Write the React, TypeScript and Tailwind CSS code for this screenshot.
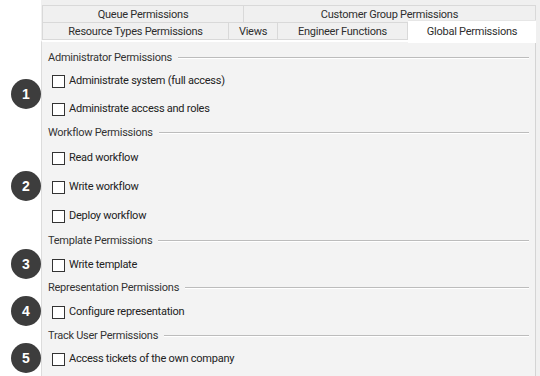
const font = { fontFamily: 'Roboto, "Noto Sans", sans-serif' };

type Row =
  | { kind: 'head'; text: string; mt: string }
  | { kind: 'check'; text: string; mt: string };

const rows: Row[] = [
  { kind: 'head', text: 'Administrator Permissions', mt: 'mt-[8px]' },
  { kind: 'check', text: 'Administrate system (full access)', mt: 'mt-[7px]' },
  { kind: 'check', text: 'Administrate access and roles', mt: 'mt-[12px]' },
  { kind: 'head', text: 'Workflow Permissions', mt: 'mt-[8px]' },
  { kind: 'check', text: 'Read workflow', mt: 'mt-[9px]' },
  { kind: 'check', text: 'Write workflow', mt: 'mt-[13px]' },
  { kind: 'check', text: 'Deploy workflow', mt: 'mt-[13px]' },
  { kind: 'head', text: 'Template Permissions', mt: 'mt-[9px]' },
  { kind: 'check', text: 'Write template', mt: 'mt-[8px]' },
  { kind: 'head', text: 'Representation Permissions', mt: 'mt-[7px]' },
  { kind: 'check', text: 'Configure representation', mt: 'mt-[8px]' },
  { kind: 'head', text: 'Track User Permissions', mt: 'mt-[8px]' },
  { kind: 'check', text: 'Access tickets of the own company', mt: 'mt-[7px]' },
];

const badges = [
  { n: '1', top: 'top-[79px]' },
  { n: '2', top: 'top-[171px]' },
  { n: '3', top: 'top-[249px]' },
  { n: '4', top: 'top-[296px]' },
  { n: '5', top: 'top-[343px]' },
];

function Tab({ label, className }: { label: string; className: string }) {
  return (
    <div className={`flex items-center justify-center border-r border-[#d9d9d9] pt-[2px] text-[11px] tracking-[-0.25px] text-[#2e2e2e] ${className}`}>
      {label}
    </div>
  );
}

export default function App() {
  return (
    <div className="relative flex h-[376px] w-[540px] overflow-hidden bg-white" style={font}>
      <div className="w-[41px] shrink-0" />

      <div className="flex flex-1 flex-col bg-[#f0f0f0] pt-[5px]">
        {/* tab strip */}
        <div className="ml-[1px] mr-[4px] flex h-[17px] border-l border-t border-[#d9d9d9]">
          <Tab label="Queue Permissions" className="w-[201px]" />
          <Tab label="Customer Group Permissions" className="flex-1" />
        </div>
        <div className="ml-[1px] mr-[4px] flex h-[18px] border-l border-t border-b border-[#d9d9d9]">
          <Tab label="Resource Types Permissions" className="w-[186px]" />
          <Tab label="Views" className="w-[49px]" />
          <Tab label="Engineer Functions" className="w-[130px]" />
          <div className="z-10 mt-[-3px] flex h-[23px] flex-1 items-start justify-center border-t border-[#e6e6e6] bg-white pt-[3px] text-[11px] tracking-[-0.25px] text-[#2e2e2e]">
            Global Permissions
          </div>
        </div>

        {/* panel */}
        <div className="mr-[4px] flex flex-1 flex-col border-l border-r border-t-2 border-l-[#dcdcdc] border-r-[#d4d4d4] border-t-white bg-[#f3f3f3] pl-[6px] pr-[6px]">
          {rows.map((r) =>
            r.kind === 'head' ? (
              <div key={r.text} className={`flex h-[16px] items-center gap-[6px] ${r.mt}`}>
                <span className="text-[11px] leading-[16px] tracking-[-0.25px] text-[#333]">{r.text}</span>
                <div className="flex-1 border-t border-b border-t-[#bcbcbc] border-b-white" />
              </div>
            ) : (
              <div key={r.text} className={`ml-[4px] flex h-[16px] items-center gap-[4px] ${r.mt}`}>
                <div className="h-[13px] w-[13px] border border-[#333] bg-white" />
                <span className="text-[11px] leading-[16px] tracking-[-0.25px] text-[#222]">{r.text}</span>
              </div>
            )
          )}
        </div>
      </div>

      {badges.map((b) => (
        <div
          key={b.n}
          className={`absolute left-[11px] ${b.top} flex h-[30px] w-[30px] items-center justify-center rounded-full bg-[#3d3d3d] text-[14px] font-bold text-white`}
          style={{ fontFamily: '"Liberation Sans", Arial, sans-serif' }}
        >
          {b.n}
        </div>
      ))}
    </div>
  );
}
